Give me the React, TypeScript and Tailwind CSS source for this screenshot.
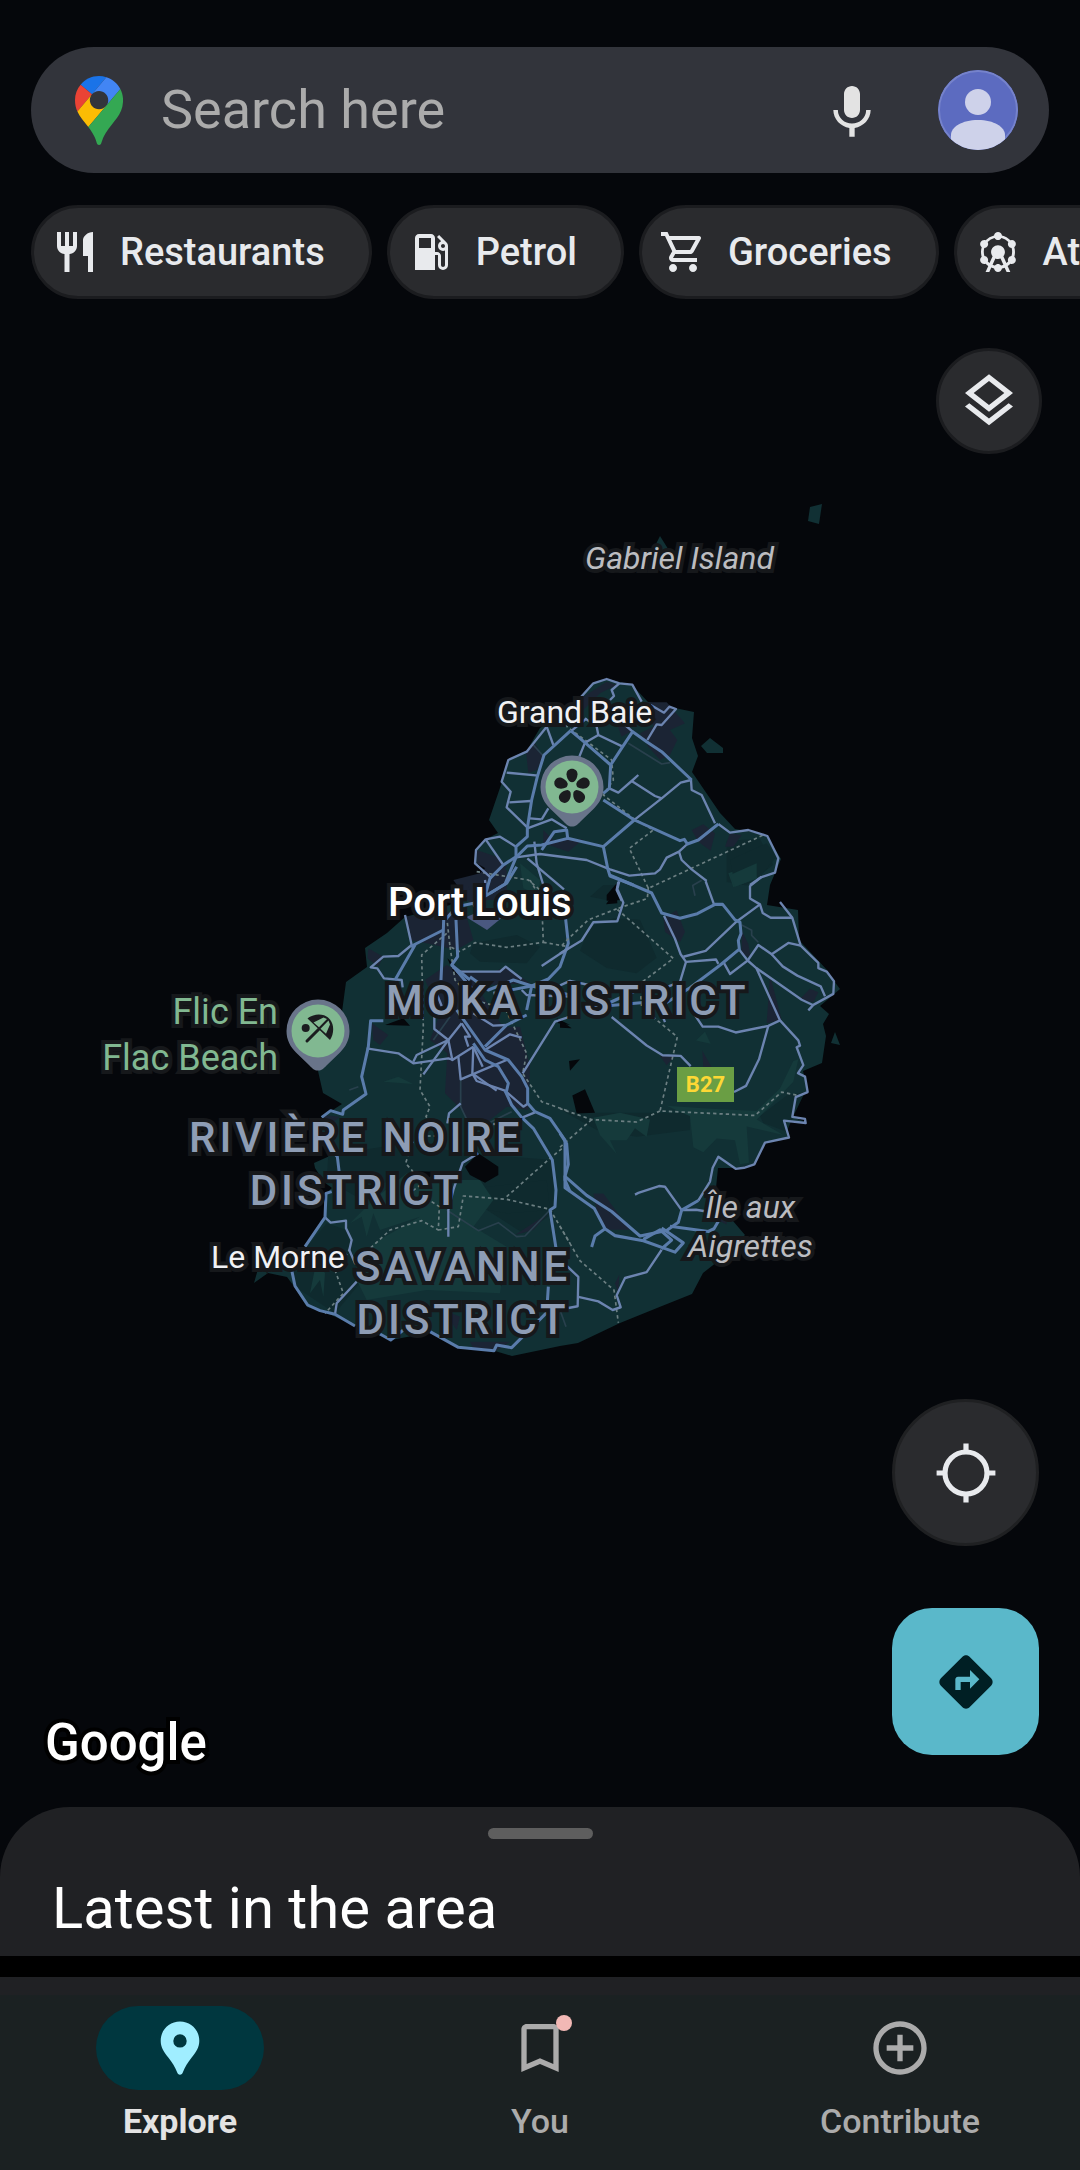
import type { ReactNode } from "react";
import type { IconType } from "react-icons";
import {
    MdAddCircleOutline,
    MdAttractions,
    MdBookmarkBorder,
    MdDirections,
    MdLocalGasStation,
    MdOutlineLayers,
    MdOutlineShoppingCart,
    MdRestaurant,
} from "react-icons/md";

const categories: { label: string; icon: IconType }[] = [
    { label: "Restaurants", icon: MdRestaurant },
    { label: "Petrol", icon: MdLocalGasStation },
    { label: "Groceries", icon: MdOutlineShoppingCart },
    { label: "Attractions", icon: MdAttractions },
];

function MapsLogo() {
    return (
        <svg viewBox="0 0 92.3 132.3" className="h-[69px] w-12 shrink-0" role="img" aria-label="Search here">
            <path fill="#1a73e8" d="M60.2 2.2C55.8.8 51 0 46.1 0 32 0 19.3 6.4 10.8 16.5l21.8 18.3L60.2 2.2z" />
            <path fill="#ea4335" d="M10.8 16.5C4.1 24.5 0 34.9 0 46.1c0 8.7 1.7 15.7 4.6 22l28-33.3-21.8-18.3z" />
            <path fill="#4285f4" d="M46.2 28.5c9.8 0 17.7 7.9 17.7 17.7 0 4.3-1.6 8.3-4.2 11.4 0 0 13.9-16.6 27.5-32.7-5.6-10.8-15.3-19-27-22.7L32.6 34.8c3.3-3.8 8.1-6.3 13.6-6.3" />
            <path fill="#fbbc04" d="M46.2 63.8c-9.8 0-17.7-7.9-17.7-17.7 0-4.3 1.5-8.3 4.1-11.3l-28 33.3c4.8 10.6 12.8 19.2 21 29.9l34.1-40.5c-3.3 3.9-8.1 6.3-13.5 6.3" />
            <path fill="#34a853" d="M59.1 109.2c15.4-24.1 33.3-35 33.3-63 0-7.7-1.9-14.9-5.2-21.3L25.6 98c2.6 3.4 5.3 7.3 7.9 11.3 9.4 14.5 6.8 23.1 12.8 23.1s3.4-8.7 12.8-23.2" />
        </svg>
    );
}

function MicIcon() {
    return (
        <svg viewBox="0 -1 24 24" className="size-16" fill="currentColor" aria-hidden="true">
            <path d="M12 14c1.66 0 3-1.34 3-3V5c0-1.66-1.34-3-3-3S9 3.34 9 5v6c0 1.66 1.34 3 3 3zm5.3-3c0 3-2.54 5.1-5.3 5.1S6.7 14 6.7 11H5c0 3.41 2.72 6.23 6 6.72V21h2v-3.28c3.28-.48 6-3.3 6-6.72h-1.7z" />
        </svg>
    );
}

function Avatar() {
    return (
        <svg viewBox="0 0 80 80" className="size-20" aria-hidden="true">
            <clipPath id="avatar-clip">
                <circle cx="40" cy="40" r="40" />
            </clipPath>
            <g clipPath="url(#avatar-clip)">
                <rect width="80" height="80" fill="#5c6bc0" />
                <circle cx="40" cy="40" r="39" fill="none" stroke="#7683cb" strokeWidth="2" />
                <circle cx="40" cy="32" r="13" fill="#ced2ea" />
                <path fill="#ced2ea" d="M13 80V65c0-8 11-15 27-15s27 7 27 15v15z" />
            </g>
        </svg>
    );
}

function LocateIcon() {
    return (
        <svg viewBox="0 0 64 64" className="size-16" fill="none" stroke="currentColor" strokeWidth="5.2" aria-hidden="true">
            <circle cx="32" cy="32" r="21" />
            <path d="M32 2.600v8M32 53.400v8M2.600 32h8M53.400 32h8" />
        </svg>
    );
}

function PlaceIcon() {
    return (
        <svg viewBox="0 0 64 64" className="size-16" fill="currentColor" fillRule="evenodd" aria-hidden="true">
            <path d="M32 5.500c-10.800 0-19.300 8.500-19.300 19.200 0 7 3.400 11.300 7.800 17 3.500 4.600 6.800 9.500 8.500 14.300.7 2 1.500 2.700 3 2.700s2.300-.7 3-2.700c1.700-4.800 5-9.700 8.500-14.300 4.400-5.700 7.800-10 7.800-17C51.300 14 42.800 5.500 32 5.500zm0 12.700a6.700 6.700 0 110 13.400 6.700 6.700 0 010-13.400z" />
        </svg>
    );
}

type Region = {
    name: string;
    transform: string;
    urban: string[];
    lightGreen: string[];
    darkGreen: string[];
    water: string[];
    faint: string[];
    borders: string[];
    minor: string[];
    major: string[];
};

// Each region is digitised on its own grid and placed on the map with a transform.
const regions: Region[] = [
    {
        name: "south-west",
        transform: "matrix(.33333 0 0 .33333 240 880)",
        darkGreen: [
            "265,825 500,790 680,820 940,840 940,1000 850,1060 600,900 450,900 350,950 260,900",
            "200,1100 260,1030 320,1050 360,1210 285,1300 165,1220 150,1170",
            "700,190 830,165 900,200 860,250 720,245 690,220",
            "660,930 920,900 930,990 800,1000 690,980",
        ],
        lightGreen: [
            "500,880 640,900 720,900 760,960 700,1040 800,1100 780,1240 560,1230 380,1260 350,1200 400,1090 540,1010 420,1050 400,1000 380,1070 365,1010 330,1030 400,960",
            "430,605 475,590 545,625 520,612",
            "230,1140 255,1180 250,1250 240,1200 210,1240",
        ],
        urban: [
            "495,110 620,95 680,110 700,180 650,210 560,190 510,180",
            "385,205 430,230 415,260 382,235",
            "555,300 620,255 700,300 760,400 790,440 840,440 870,560 865,690 800,680 700,760 665,690 615,640 622,520 570,480 600,400",
            "660,270 760,275 800,260 870,310 760,315 690,300",
            "395,430 445,465 420,495 400,480",
            "248,705 300,710 262,740",
            "825,1065 925,1000 880,1050",
            "610,1290 660,1310 650,1350",
            "690,1385 810,1385 765,1415 700,1405",
            "640,0 720,-20 760,-60 740,60 690,70",
        ],
        water: [
            "675,860 715,820 775,860 775,885 735,908 690,885",
            "435,435 490,415 510,437",
            "950,415 990,435 955,430",
            "525,873 580,875 560,905",
            "622,235 690,300 680,305 640,275",
        ],
        faint: [
            "630,410 580,480",
            "662,598 662,680 700,760",
            "620,990 715,1052 775,1028 830,1070 855,1068 930,990",
            "328,630 355,620",
            "715,745 815,695",
            "960,1290 978,1340",
        ],
        borders: [
            "620,160 545,225 550,440 540,630 570,680 558,710 580,730",
            "610,768 545,768 515,790 497,850 515,870 545,912 515,935",
            "575,965 598,980 595,1050 545,1022 450,1050 385,1110",
            "595,1050 655,1040 670,948 800,958 930,988 990,1090",
            "800,950 930,835 985,790",
            "285,1170 310,1240 255,1300",
            "620,110 630,200 660,215 705,188 800,202 910,187 905,60 870,0",
            "630,200 645,300 700,360 795,385 860,520 848,580 905,665 990,695",
            "910,187 985,200",
            "330,1105 305,1150",
        ],
        minor: [
            "495,105 515,195 475,228 430,230 392,262 412,265 432,295 485,300 488,322",
            "380,505 475,520 520,550 625,535 640,540",
            "520,545 530,525 625,480 665,430",
            "550,583 625,480 583,447 583,410",
            "625,480 637,540 700,500",
            "665,430 690,470 675,470 685,500",
            "655,530 662,598 740,565 800,540",
            "700,500 697,580 770,632",
            "700,500 728,560",
            "697,580 710,603 795,632 850,680 862,672",
            "735,510 810,463 845,473",
            "662,670 627,700 622,730",
            "715,820 668,848 640,930 625,990 625,1070",
            "255,1012 272,1028 318,1022 318,1045 335,1080 328,1110 345,1150 380,1170",
            "350,1205 290,1270 285,1303",
            "990,410 945,425 848,580",
            "905,258 985,205",
            "650,275 780,275 797,260 845,297",
            "700,400 760,437 800,435",
            "848,712 885,697",
            "760,732 805,732",
            "845,330 860,345 990,350",
            "590,340 605,378",
            "735,0 740,40 700,80",
        ],
        major: [
            "430,422 392,422 385,500 365,590 378,642 310,690 308,703 272,692 245,712",
            "265,800 292,830 298,880",
            "275,935 258,940 255,1012 195,1100",
            "155,1170 165,1218 203,1275 240,1292 285,1303 345,1338",
            "420,1362 452,1380 490,1350",
            "570,1355 655,1402 762,1412 770,1395 815,1403 920,1298 925,1220",
            "948,1105 930,990 945,980 948,930 937,840 880,745 845,712 815,675 795,632",
            "612,90 610,150 603,300",
            "620,115 650,80 700,70 800,10 830,-40",
            "648,120 653,230 635,255 690,300",
            "610,150 515,198 525,195 465,300",
            "635,255 700,330",
            "690,290 745,330 820,300 875,318 925,297 960,260 985,190 975,100",
            "760,340 875,318 990,345",
            "875,318 860,390",
            "650,390 735,510 805,540 845,590 863,625 863,670 885,695 930,715 975,780 975,900 990,935",
            "700,490 735,540 775,560 805,610 798,640",
            "735,500 800,435 860,405",
        ],
    },
    {
        name: "south-east",
        transform: "matrix(.33333 0 0 .34435 560 820)",
        darkGreen: [
            "160,285 240,290 290,400 230,445 140,430 60,380 90,310",
            "600,860 680,800 735,790 700,860 680,905 610,880",
            "500,60 600,55 640,130 560,190 500,180",
            "0,840 110,900 230,920 390,900 390,850 100,850",
        ],
        lightGreen: [
            "100,865 180,850 270,870 260,920 225,895 200,930 150,930 170,970 120,915",
            "320,830 440,838 590,845 660,780 700,700 715,695 700,760 610,850 590,870 670,915 560,890 567,995 540,1000 525,930 470,925 430,965 400,950 390,860",
            "505,155 590,125 592,170 520,195",
            "408,640 435,615 452,650",
        ],
        urban: [
            "310,285 350,262 375,325 360,355 315,325",
            "545,320 565,360 572,400 545,390",
            "620,590 630,450 665,580",
            "100,1085 130,1085 210,1190 140,1190 110,1135",
            "750,490 775,500 760,530 720,520",
            "427,670 455,718 430,718",
            "300,685 345,685 320,712",
            "165,1345 178,1320 175,1375",
            "470,1160 500,1150 500,1175",
        ],
        water: [
            "37,800 75,782 105,850 50,852",
            "138,245 170,200 172,242",
            "27,700 60,695 30,728",
            "0,580 35,605 0,603",
        ],
        faint: ["545,305 575,320 575,335 595,355", "425,175 398,190 405,220"],
        borders: [
            "265,195 262,228 170,258 340,402 240,475 245,545 352,630 300,845 585,858 665,790 715,800",
            "300,845 230,877 95,870 0,838",
            "95,870 0,950",
            "170,258 85,290 25,345 0,370",
            "0,1180 60,1280 162,1365 175,1460",
        ],
        minor: [
            "605,165 570,192 570,228 600,245 608,270 632,284 697,284",
            "660,238 697,284 722,365 775,415 775,430 800,440 822,468 820,505 760,537 745,553",
            "722,365 685,357 635,390 595,363 563,408",
            "635,390 668,425 712,452 782,483 795,512",
            "537,375 563,408 510,447 490,412",
            "563,408 589,430 725,522 760,538",
            "589,430 660,582 625,598 527,617 475,600 428,600 390,545 390,490",
            "660,582 715,640 720,655 710,660 730,712 714,735 735,745 743,790 707,805 697,862 735,868 737,880 672,873 687,922 615,937 583,1000 552,1010 527,1013 475,978 458,1010 450,1050 415,1105",
            "625,598 597,695 558,772 522,790",
            "600,245 527,297 437,380 370,397",
            "312,278 345,345 362,390 378,412 468,405 475,418",
            "378,412 360,470 320,485",
            "437,178 462,245",
            "178,178 172,200 190,240 172,294 100,297 65,350 0,388",
            "155,572 260,655 308,683 362,685 392,715",
            "225,1088 235,1083 297,1063 315,1065 365,1133 408,1132 440,1137",
            "305,1248 260,1313 195,1330 170,1380 182,1415 158,1423 115,1398 55,1385",
            "15,1290 55,1327 53,1412 25,1417",
            "0,480 30,467 90,480 90,530",
            "300,550 315,587",
        ],
        major: [
            "150,160 275,212 305,270 360,285 412,272 465,245 488,245 525,290 540,297 543,330 535,350 538,375 480,422 390,487 320,530",
            "0,910 20,940 25,1000 15,1035 80,1090 155,1137 240,1208 320,1192 355,1168 365,1133 415,1105",
            "330,1180 445,1195 462,1187 478,1160",
            "15,1035 15,1068 103,1128 135,1187 165,1207 250,1222 345,1255 370,1228 305,1185",
            "135,1187 105,1208 95,1240",
            "250,1218 300,1190 335,1220 305,1245",
            "80,545 250,530",
            "150,530 240,490",
        ],
    },
    {
        name: "north",
        transform: "matrix(.33333 0 0 .33333 440 480)",
        darkGreen: ["870,1140 980,1090 1010,1130 960,1190 880,1190", "490,1215 530,1215 500,1260 450,1250"],
        lightGreen: ["870,1185 950,1150 950,1195 885,1220", "240,1150 300,1200 295,1245 250,1225"],
        urban: [
            "415,660 500,605 530,615 480,640 430,690",
            "620,667 680,667 735,730 690,750 712,780 690,825 660,840 625,800 600,760 640,740",
            "258,815 285,790 310,830 290,870 265,880",
            "755,1050 790,1033 825,1060 812,1112 775,1085",
            "870,1060 905,1065 880,1100 855,1100",
            "110,1110 170,1130 200,1160 180,1190 110,1150",
            "85,1220 140,1170 200,1170 200,1260 100,1260",
            "310,1050 340,1080 430,1078 385,1115 310,1090",
            "530,730 580,750 545,770",
        ],
        water: ["500,1245 530,1210 545,1260 500,1262"],
        faint: ["280,795 310,828", "565,790 665,852 690,848"],
        borders: [
            "375,735 515,840 520,900 490,945 580,1015 640,1050 568,1105 625,1225 970,1065",
            "110,1175 265,1200 300,1230",
        ],
        minor: [
            "320,740 260,815 205,840 185,905 212,935 200,982 262,1042",
            "320,740 340,795",
            "415,660 460,610 500,597 538,610 577,614 605,665",
            "538,610 515,630 522,648 510,660",
            "632,675 672,698 688,680 708,687 665,735 650,733 622,780",
            "435,715 470,740 475,765 548,800",
            "475,765 435,788 418,830",
            "395,752 440,715",
            "555,735 578,755",
            "200,878 295,887",
            "208,967 272,963",
            "270,1015 305,1018",
            "262,1045 335,1018 380,1045",
            "305,1018 325,985",
            "508,925 535,938 575,903 595,885",
            "575,903 645,948 665,955",
            "585,1018 665,955 722,908 753,900 755,930 785,945 825,1030",
            "835,1032 870,1058 925,1050 982,1068 1015,1135 1005,1178 963,1192 930,1215",
            "742,1092 717,1115 680,1133 660,1168 645,1180 568,1187 510,1168 440,1140 300,1122 228,1132",
            "717,1115 725,1140 755,1168 800,1203",
            "535,1205 530,1230 545,1262",
            "228,1100 180,1070 137,1078 108,1110 105,1150 155,1195",
            "137,1078 190,1155",
            "262,1135 372,1228",
            "283,1085 290,1150 310,1215",
        ],
        major: [
            "392,752 312,825 292,890 275,960 262,1045 262,1070 228,1100 228,1130 190,1155 150,1195 140,1230 115,1260",
            "392,752 435,788 512,855 508,925 490,940",
            "512,855 548,800 578,755 620,785 665,815 755,900",
            "490,960 583,1020 720,1082 733,1078 742,1092 775,1080 835,1032",
            "583,1020 490,1100 503,1165 510,1188 580,1215",
            "490,1100 383,1075 305,1095 262,1098 228,1132",
            "383,1075 380,1050 343,1055 305,1110",
            "228,1132 195,1212 150,1240",
        ],
    },
];

function IslandMap() {
    return (
        <svg viewBox="0 0 1080 1807" className="size-full" aria-hidden="true">
            <g fill="#113034">
                <path d="M607 679 632 685 648 702 670 707 694 712 692 738 698 756 692 772 720 813 735 829 748 831 767 836 781 859 770 885 767 905 798 910 799 940 827 970 834 981 840 989 820 1006 829 1014 823 1024 826 1036 822 1063 803 1071 808 1092 796 1097 792 1117 806 1122 784 1121 789 1137 765 1143 755 1164 736 1168 718 1168 716 1188 710 1199 733 1221 745 1235 717 1262 703 1273 692 1294 662 1306 620 1323 578 1343 560 1346 512 1356 495 1351 458 1347 430 1332 407 1337 391 1340 355 1326 327 1313 307 1307 293 1285 287 1277 268 1273 254 1283 260 1262 305 1247 325 1217 326 1193 332 1188 324 1182 315 1168 314 1163 332 1155 322 1137 322 1117 342 1104 323 1093 318 1071 340 1027 346 982 367 967 365 948 387 933 405 917 450 905 468 887 492 868 475 863 476 850 486 839 498 833 489 820 502 782 508 760 526 752 540 728 567 710 593 683z" />
                <path d="M810 507 822 504 819 524 808 521z" />
                <path d="M660 536 670 552 653 550z" />
                <path d="M701 746 710 738 723 748 723 753 707 753z" />
                <path d="M835 1032 840 1045 831 1043z" />
            </g>
            {regions.map((region) => (
                <g key={region.name} transform={region.transform}>
                    <g fill="#0f2a2e">{region.darkGreen.map((p) => <polygon key={p} points={p} />)}</g>
                    <g fill="#153a3b">{region.lightGreen.map((p) => <polygon key={p} points={p} />)}</g>
                    <g fill="#1b2434">{region.urban.map((p) => <polygon key={p} points={p} />)}</g>
                    <g fill="#05070b">{region.water.map((p) => <polygon key={p} points={p} />)}</g>
                </g>
            ))}
            <path fill="#4a5880" d="M466 917 489 908 504 916 487 930z" />
            {regions.map((region) => (
                <g key={region.name} transform={region.transform} fill="none" strokeLinejoin="round">
                    <g stroke="#29404d" strokeWidth="5">{region.faint.map((p) => <polyline key={p} points={p} />)}</g>
                    <g stroke="#6c7f82" strokeWidth="5" strokeDasharray="10 9">
                        {region.borders.map((p) => <polyline key={p} points={p} />)}
                    </g>
                    <g stroke="#6c84b0" strokeWidth="7">{region.minor.map((p) => <polyline key={p} points={p} />)}</g>
                    <g stroke="#5a7cab" strokeWidth="9">{region.major.map((p) => <polyline key={p} points={p} />)}</g>
                </g>
            ))}
        </svg>
    );
}

function MapPin({ className, children }: { className: string; children: ReactNode }) {
    return (
        <svg viewBox="-32 -32 64 74" className={`absolute h-[74px] w-16 ${className}`} aria-hidden="true">
            <path fill="#69748a" d="M0-31.500A31.500 31.500 0 00-31.500 0c0 9 4 16 9.500 21.500L-9 34c4 4 5 5.500 9 5.500s5-1.500 9-5.500L22 21.500C27.500 16 31.500 9 31.500 0A31.500 31.500 0 000-31.500z" />
            <circle r="26.500" fill="#81b891" />
            {children}
        </svg>
    );
}

const halo = "absolute whitespace-nowrap [-webkit-text-stroke:8px_#16181b] [paint-order:stroke]";
const town = `${halo} text-[32px] leading-10 text-[#f1f2f5]`;
const islet = `${halo} text-[32px] leading-[39px] text-[#bcbdc1] italic`;
const district = `${halo} text-[42px] leading-[53px] font-medium tracking-[4px] text-[#8e9db5]`;

function MapCanvas() {
    return (
        <div className="absolute top-0 left-1/2 h-[1807px] w-[1080px] -translate-x-1/2">
            <IslandMap />
            <p className={`${islet} top-[539px] left-[585px]`}>Gabriel Island</p>
            <p className={`${town} top-[692px] left-[497px]`}>Grand Baie</p>
            <p className={`${halo} top-[878px] left-[388px] text-[40px] leading-[50px] font-medium text-white`}>Port Louis</p>
            <p className={`${district} top-[974px] left-[386px]`}>MOKA DISTRICT</p>
            <p className={`${district} top-[1111px] left-[189px] text-center`}>
                RIVIÈRE NOIRE
                <br />
                DISTRICT
            </p>
            <p className={`${district} top-[1240px] left-[355px] text-center`}>
                SAVANNE
                <br />
                DISTRICT
            </p>
            <p className={`${town} top-[1237px] left-[211px]`}>Le Morne</p>
            <p className={`${halo} top-[989px] right-[802px] text-right text-[36px] leading-[46px] text-[#81b891]`}>
                Flic En
                <br />
                Flac Beach
            </p>
            <p className={`${islet} top-[1188px] left-[688px] text-center`}>
                Île aux
                <br />
                Aigrettes
            </p>
            <p className="absolute top-[1067px] left-[677px] h-[35px] w-[57px] bg-[#6a9e44] text-center text-[22px] leading-[35px] font-bold text-[#fdd835]">
                B27
            </p>
            <MapPin className="top-[755px] left-[540px]">
                <g fill="#1b1c1f">
                    <path id="petal" d="M-2-5.200C-4-7-5.500-10-5.500-12.800c0-3.200 2.300-5.500 5.500-5.500s5.500 2.300 5.500 5.500C5.500-10 4-7 2-5.200 1-4.700-1-4.700-2-5.200z" />
                    <use href="#petal" transform="rotate(72)" />
                    <use href="#petal" transform="rotate(144)" />
                    <use href="#petal" transform="rotate(216)" />
                    <use href="#petal" transform="rotate(288)" />
                </g>
            </MapPin>
            <MapPin className="top-[999px] left-[286px]">
                <g fill="#1b1c1f">
                    <circle cx="-12.300" cy="-3" r="4" />
                    <path d="M-10.500-12.500C-4-18 7-18 12-11.500 16.500-6 16 3 12 9z" />
                </g>
                <path d="M-11 10 2-3" stroke="#1b1c1f" strokeWidth="3" strokeLinecap="round" />
                <path d="M-4.500-8.500 5.500-13.500 9-12 1-3.800zM2.500-2.200 10.500-10.500 12-6.500 8 2.800z" fill="#81b891" />
            </MapPin>
        </div>
    );
}

function SearchBar() {
    return (
        <form className="mx-[31px] flex h-[126px] items-center rounded-full bg-[#32343b] pr-[31px] pl-11" role="search">
            <label htmlFor="search">
                <MapsLogo />
            </label>
            <input
                id="search"
                type="text"
                placeholder="Search here"
                className="ml-[38px] min-w-0 flex-1 bg-transparent text-[54px] leading-[64px] text-[#e3e3e3] outline-none placeholder:text-[#ababab]"
            />
            <button type="button" aria-label="Search by voice" className="text-[#e3e3e3]">
                <MicIcon />
            </button>
            <button type="button" aria-label="Account" className="ml-[54px]">
                <Avatar />
            </button>
        </form>
    );
}

function CategoryChips() {
    return (
        <div className="mt-8 flex gap-[15px] overflow-x-auto pl-[31px] [scrollbar-width:none]">
            {categories.map(({ label, icon: Icon }) => (
                <button
                    key={label}
                    type="button"
                    className="flex h-[94px] shrink-0 items-center gap-[21px] rounded-full border-3 border-[#1b1c1f] bg-[#2a2b2e] pr-11 pl-[17px] text-[38px] font-medium text-[#e8eaed]"
                >
                    <Icon className="size-12" />
                    {label}
                </button>
            ))}
        </div>
    );
}

function NavItem({ label, active = false, children }: { label: string; active?: boolean; children: ReactNode }) {
    return (
        <a
            href="#"
            aria-current={active ? "page" : undefined}
            className={`flex flex-1 flex-col items-center text-[34px] leading-10 ${active ? "font-bold text-[#e3e3e3]" : "font-medium text-[#ababab]"}`}
        >
            <span
                className={`relative mb-[11px] flex h-[84px] w-[168px] items-center justify-center rounded-full ${active ? "bg-[#00373f] text-[#a0eeff]" : ""}`}
            >
                {children}
            </span>
            {label}
        </a>
    );
}

export default function App() {
    return (
        <div className="flex min-h-screen flex-col bg-[#05070b] font-[Roboto,'Open_Sans',sans-serif]">
            <main className="relative flex flex-1 flex-col overflow-hidden pt-[47px]">
                <MapCanvas />
                <div className="relative flex flex-1 flex-col">
                    <SearchBar />
                    <CategoryChips />
                    <button
                        type="button"
                        aria-label="Layers"
                        className="mt-[49px] mr-[38px] flex size-[106px] items-center justify-center self-end rounded-full border-3 border-[#1b1c1f] bg-[#2a2b2e] text-[#e8eaed]"
                    >
                        <MdOutlineLayers className="size-16" />
                    </button>
                    <div className="mt-auto flex items-end justify-between pr-[41px] pb-7 pl-[45px]">
                        <p className="text-[51px] leading-[72px] font-medium text-white [-webkit-text-stroke:8px_#000] [paint-order:stroke]">
                            Google
                        </p>
                        <div className="mb-6 flex flex-col gap-[62px]">
                            <button
                                type="button"
                                aria-label="My location"
                                className="flex size-[147px] items-center justify-center rounded-full border-3 border-[#1f2022] bg-[#2a2b2e] text-[#e8eaed]"
                            >
                                <LocateIcon />
                            </button>
                            <button
                                type="button"
                                aria-label="Directions"
                                className="flex size-[147px] items-center justify-center rounded-[40px] bg-[#5ab8ca] text-[#001f24]"
                            >
                                <MdDirections className="size-16" />
                            </button>
                        </div>
                    </div>
                </div>
            </main>
            <section className="flex flex-col rounded-t-[70px] bg-[#202124] pt-[21px] pb-3">
                <div className="h-[11px] w-[105px] self-center rounded-full bg-[#5e5e5e]" />
                <h2 className="mt-[33px] pl-[52px] text-[58px] leading-[72px] text-white">Latest in the area</h2>
            </section>
            <div className="h-[21px] bg-black" />
            <nav className="flex border-t-18 border-[#202124] bg-[#1b2122] pt-[11px] pb-[29px]">
                <NavItem label="Explore" active>
                    <PlaceIcon />
                </NavItem>
                <NavItem label="You">
                    <MdBookmarkBorder className="size-16" />
                    <span className="absolute top-[9px] right-[52px] size-4 rounded-full bg-[#f2b8b5]" />
                </NavItem>
                <NavItem label="Contribute">
                    <MdAddCircleOutline className="size-16" />
                </NavItem>
            </nav>
        </div>
    );
}
